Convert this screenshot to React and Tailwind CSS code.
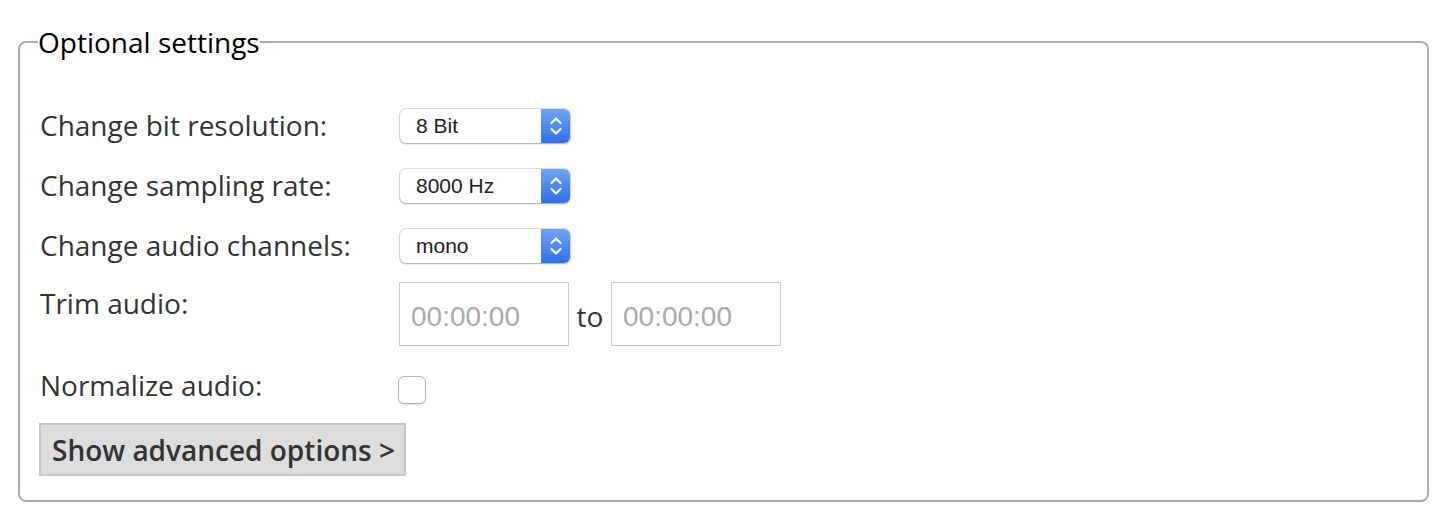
import React from 'react'

const font = { fontFamily: '"Open Sans", sans-serif' }

function Select({ value }) {
  return (
    <div className="flex h-[34px] w-[170px] items-stretch rounded-[6px] bg-white shadow-[0_0_0_1px_rgba(0,0,0,0.12),0_1px_2px_rgba(0,0,0,0.25)]">
      <span className="flex flex-1 items-center pl-[16px] text-[21px] text-[#222] font-['Liberation_Sans',Arial,sans-serif]">
        {value}
      </span>
      <span className="flex w-[29px] items-center justify-center rounded-r-[6px] bg-gradient-to-b from-[#6fa3f8] to-[#2a6ef5]">
        <svg width="14" height="22" viewBox="0 0 14 22" fill="none" stroke="white" strokeWidth="2.2" strokeLinecap="round" strokeLinejoin="round">
          <path d="M2.5 8 L7 3.5 L11.5 8" />
          <path d="M2.5 14 L7 18.5 L11.5 14" />
        </svg>
      </span>
    </div>
  )
}

function TimeInput() {
  return (
    <input
      type="text"
      placeholder="00:00:00"
      className="h-[64px] w-[170px] border border-[#c8c8c8] bg-white px-[11px] pt-[5px] text-[28px] text-[#333] placeholder:text-[#aaa] font-['Liberation_Sans',Arial,sans-serif] outline-none"
    />
  )
}

export default function App() {
  return (
    <div className="min-h-screen bg-white pt-[25px] pl-[18px] pr-[13px]" style={font}>
      <fieldset className="rounded-[8px] border-2 border-[#ababab] pb-[24px] pl-[20px]">
        <legend className="-ml-[2px] px-0 text-[28px] leading-[34px] text-black">Optional settings</legend>

        <div className="mt-[37px] flex flex-col text-[28px] text-[#333]">
          <div className="flex h-[60px] items-center">
            <span className="mb-[3px] w-[360px] leading-[36px]">Change bit resolution:</span>
            <Select value="8 Bit" />
          </div>
          <div className="flex h-[60px] items-center">
            <span className="mb-[3px] w-[360px] leading-[36px]">Change sampling rate:</span>
            <Select value="8000 Hz" />
          </div>
          <div className="flex h-[60px] items-center">
            <span className="mb-[3px] w-[360px] leading-[36px]">Change audio channels:</span>
            <Select value="mono" />
          </div>
          <div className="flex items-start pt-[6px]">
            <span className="mt-[3px] w-[359px] leading-[36px]">Trim audio:</span>
            <TimeInput />
            <span className="flex h-[64px] w-[42px] items-center justify-center pt-[3px]">to</span>
            <TimeInput />
          </div>
          <div className="mt-[30px] flex items-start">
            <span className="-mt-[9px] w-[358px] leading-[36px]">Normalize audio:</span>
            <span className="h-[28px] w-[28px] rounded-[6px] border border-[#b5b5b5] bg-white shadow-[0_1px_1px_rgba(0,0,0,0.12)]" />
          </div>
          <div className="mt-[19px]">
            <button className="-ml-[1px] h-[53px] border-2 border-[#c6c6c6] bg-[#dddddd] pl-[11px] pr-[9px] text-[28px] font-semibold leading-[36px] text-[#333]">
              Show advanced options &gt;
            </button>
          </div>
        </div>
      </fieldset>
    </div>
  )
}
